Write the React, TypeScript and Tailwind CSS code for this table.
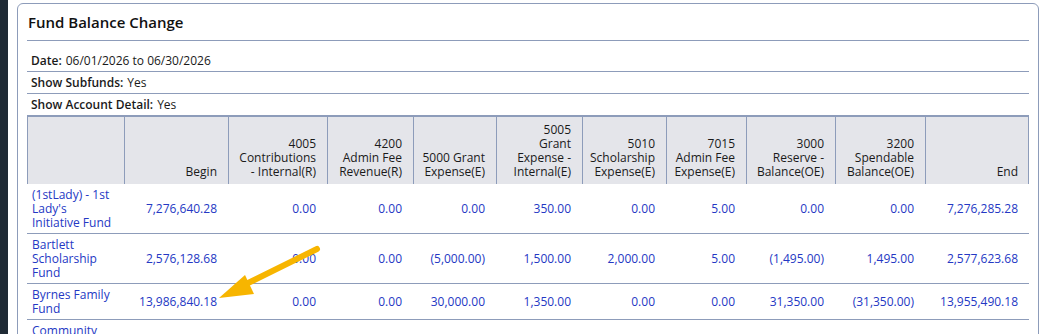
import React from "react";

/* ─── Column layout ─────────────────────────────────────────────────────── */
const GRID =
  "grid grid-cols-[97px_104px_99px_86px_83px_86px_84px_80px_89px_90px_104px]";

const HEADERS: string[][] = [
  [],
  ["Begin"],
  ["4005", "Contributions", "- Internal(R)"],
  ["4200", "Admin Fee", "Revenue(R)"],
  ["5000 Grant", "Expense(E)"],
  ["5005", "Grant", "Expense -", "Internal(E)"],
  ["5010", "Scholarship", "Expense(E)"],
  ["7015", "Admin Fee", "Expense(E)"],
  ["3000", "Reserve -", "Balance(OE)"],
  ["3200", "Spendable", "Balance(OE)"],
  ["End"],
];

type Row = { fund: string[]; values: string[] };

const ROWS: Row[] = [
  {
    fund: ["(1stLady) - 1st", "Lady's", "Initiative Fund"],
    values: ["7,276,640.28", "0.00", "0.00", "0.00", "350.00", "0.00", "5.00", "0.00", "0.00", "7,276,285.28"],
  },
  {
    fund: ["Bartlett", "Scholarship", "Fund"],
    values: ["2,576,128.68", "0.00", "0.00", "(5,000.00)", "1,500.00", "2,000.00", "5.00", "(1,495.00)", "1,495.00", "2,577,623.68"],
  },
  {
    fund: ["Byrnes Family", "Fund"],
    values: ["13,986,840.18", "0.00", "0.00", "30,000.00", "1,350.00", "0.00", "0.00", "31,350.00", "(31,350.00)", "13,955,490.18"],
  },
  {
    fund: ["Community", "Foundation", "Fund"],
    values: ["1,204,512.40", "0.00", "0.00", "0.00", "0.00", "0.00", "0.00", "0.00", "0.00", "1,204,512.40"],
  },
];

const FILTERS = [
  { label: "Date:", value: "06/01/2026 to 06/30/2026" },
  { label: "Show Subfunds:", value: "Yes" },
  { label: "Show Account Detail:", value: "Yes" },
];

/* ─── Component ─────────────────────────────────────────────────────────── */
export default function App() {
  return (
    <div
      className="relative flex h-[334px] w-[1049px] overflow-hidden bg-white text-[12px] leading-[14px] text-[#1a1a1a]"
      style={{ fontFamily: '"Open Sans", "Noto Sans", sans-serif' }}
    >
      {/* dark sidebar edge */}
      <div className="w-[8px] flex-shrink-0 bg-[#1f2a35]" />

      <div className="pl-[9px] pt-[3px]">
        <div className="h-[400px] w-[1022px] rounded-t-[6px] border border-[#8d9cba] px-[9px]">
          {/* ── Title ─────────────────────────────────────────── */}
          <div className="flex h-[37px] items-center border-b border-[#8d9cba] pl-[1px]">
            <h1 className="text-[15px] font-semibold text-[#111]">Fund Balance Change</h1>
          </div>

          {/* ── Report filters ────────────────────────────────── */}
          <div className="mt-[9px]">
            {FILTERS.map((f, i) => (
              <div
                key={f.label}
                className={
                  i < FILTERS.length - 1
                    ? "flex h-[22px] items-center border-b border-[#8d9cba] pl-1"
                    : "flex h-[21px] items-center pl-1"
                }
              >
                <span className="font-semibold">{f.label}</span>
                <span className="ml-1">{f.value}</span>
              </div>
            ))}
          </div>

          {/* ── Table header ──────────────────────────────────── */}
          <div className={`${GRID} border-t-2 border-r border-[#8d9cba] bg-[#e4e5ea]`}>
            {HEADERS.map((lines, i) => (
              <div
                key={i}
                className="flex flex-col items-end justify-end border-l border-[#8d9cba] pt-[6px] pb-[5px] pr-[11px] text-right"
              >
                {lines.map((l) => (
                  <span key={l} className="whitespace-nowrap">{l}</span>
                ))}
              </div>
            ))}
          </div>

          {/* ── Table body ────────────────────────────────────── */}
          {ROWS.map((r) => (
            <div key={r.fund.join(" ")} className={`${GRID} border-b border-[#8d9cba] text-[#2438c4]`}>
              <div className="flex flex-col pt-[4px] pb-[3px] pl-[5px]">
                {r.fund.map((l) => (
                  <span key={l} className="whitespace-nowrap">{l}</span>
                ))}
              </div>
              {r.values.map((v, i) => (
                <div key={i} className="flex items-center justify-end whitespace-nowrap pr-[11px]">
                  {v}
                </div>
              ))}
            </div>
          ))}
        </div>
      </div>

      {/* annotation arrow */}
      <svg className="pointer-events-none absolute left-0 top-0" width="1049" height="334">
        <line x1="317" y1="249" x2="242" y2="286" stroke="#f7b500" strokeWidth="6" strokeLinecap="round" />
        <polygon points="219,298 245,275 254,294" fill="#f7b500" />
      </svg>
    </div>
  );
}
